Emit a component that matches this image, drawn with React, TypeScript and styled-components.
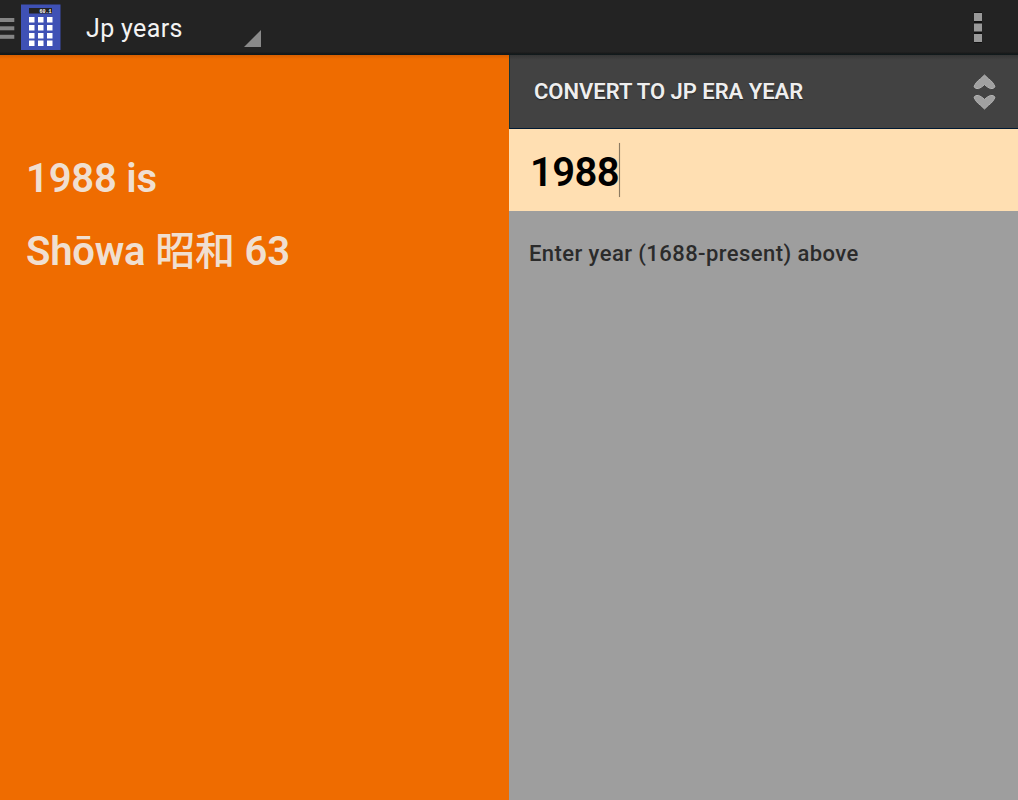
import React from "react";
import styled, { createGlobalStyle } from "styled-components";

const GlobalStyle = createGlobalStyle`
  * { box-sizing: border-box; }
  body { margin: 0; background: #9e9e9e; font-family: Roboto, "Noto Sans CJK JP", sans-serif; }
`;

const Screen = styled.div`
  width: 1018px;
  height: 800px;
  display: flex;
  flex-direction: column;
  overflow: hidden;
`;

const ActionBar = styled.header`
  height: 55px;
  flex: none;
  display: flex;
  align-items: flex-start;
  background: linear-gradient(#232323 0 52px, #1a1a1a 53px, #0f191c 55px);
`;

const DrawerIcon = styled.svg`
  flex: none;
  width: 15px;
  height: 55px;
`;

const AppIcon = styled.svg`
  flex: none;
  width: 40px;
  height: 47px;
  margin: 4px 0 0 6px;
`;

const Spinner = styled.div`
  width: 175px;
  height: 47px;
  margin-left: 25px;
  display: flex;
  justify-content: space-between;
  align-items: flex-end;
`;

const SpinnerLabel = styled.span`
  color: #f3f3f3;
  font-size: 25px;
  line-height: 30px;
  letter-spacing: 0.35px;
  padding-bottom: 3px;
  white-space: nowrap;
`;

const SpinnerCorner = styled.svg`
  width: 17px;
  height: 17px;
`;

const OverflowIcon = styled.svg`
  width: 10px;
  height: 32px;
  margin: 12px 35px 0 auto;
`;

const Panes = styled.main`
  flex: 1;
  display: flex;
`;

const ResultPane = styled.section`
  width: 509px;
  padding: 88px 26px 0;
  background: linear-gradient(#d85f00, #ef6c00 4px);
`;

const ResultLine = styled.p`
  margin: 0 0 1px;
  color: #f0dfd0;
  font-size: 40px;
  font-weight: 600;
  line-height: 72px;
  height: 72px;
  letter-spacing: -0.2px;
  white-space: pre;
`;

const EraName = styled.span`
  font-weight: 500;
`;

const InputPane = styled.section`
  flex: 1;
  display: flex;
  flex-direction: column;
  background: #9e9e9e;
`;

const ModeSelector = styled.div`
  height: 74px;
  display: flex;
  align-items: center;
  justify-content: space-between;
  padding: 0 22px 0 24px;
  border-left: 1px solid #173437;
  border-bottom: 1px solid #001a35;
  background: linear-gradient(#363636, #424242 5px);
`;

const ModeLabel = styled.span`
  color: #eeeeee;
  font-size: 22px;
  font-weight: 600;
  line-height: 28px;
  letter-spacing: -0.03px;
  text-shadow: 0 1px 1px #222;
`;

const ModeArrows = styled.svg`
  width: 23px;
  height: 36px;
`;

const YearField = styled.div`
  height: 82px;
  display: flex;
  align-items: center;
  padding: 4px 0 0 21px;
  background: #ffdfb2;
  color: #000;
  font-size: 40px;
  font-weight: 600;
  letter-spacing: -0.6px;
`;

const Caret = styled.span`
  width: 1px;
  height: 54px;
  margin-top: -4px;
  background: #8c7b62;
  box-shadow: 0 0 1px #b09a7b;
`;

const Hint = styled.p`
  margin: 28px 0 0 20px;
  color: #2b2b2b;
  font-size: 22px;
  font-weight: 500;
  line-height: 30px;
  letter-spacing: 0.43px;
  white-space: nowrap;
`;

const keyRows = [13, 21, 29, 36.5];
const keyCols = [8, 17, 26];

export default function App() {
  return (
    <Screen>
      <GlobalStyle />
      <ActionBar>
        <DrawerIcon viewBox="0 0 15 55" fill="#858585">
          <rect y="18" width="14.3" height="4" />
          <rect y="26.3" width="14.3" height="4" />
          <rect y="34.8" width="14.3" height="4" />
        </DrawerIcon>
        <AppIcon viewBox="0 0 40 47">
          <rect y="0.5" width="39.5" height="45.5" fill="#3f51b5" />
          <rect x="8" y="4" width="23" height="5.5" fill="#242424" />
          <text x="18.5" y="8.5" fontSize="5" fontWeight="700" fontFamily="Liberation Mono, monospace" fill="#fff">
            60.1
          </text>
          {keyRows.map((y) =>
            keyCols.map((x) => <rect key={`${x}-${y}`} x={x} y={y} width="5.5" height="5.5" fill="#fff" />)
          )}
        </AppIcon>
        <Spinner>
          <SpinnerLabel>Jp years</SpinnerLabel>
          <SpinnerCorner viewBox="0 0 17 17">
            <path d="M17 0V17H0Z" fill="#8a8a8a" />
          </SpinnerCorner>
        </Spinner>
        <OverflowIcon viewBox="0 0 10 32">
          <path d="M1 0h8v31H1z" fill="#111" />
          <path d="M1 1h8v8H1zM1 11.5h8v8H1zM1 22h8v8H1z" fill="#999" />
        </OverflowIcon>
      </ActionBar>
      <Panes>
        <ResultPane>
          <ResultLine>1988 is</ResultLine>
          <ResultLine>
            Shōwa <EraName>昭和</EraName> 63
          </ResultLine>
        </ResultPane>
        <InputPane>
          <ModeSelector>
            <ModeLabel>CONVERT TO JP ERA YEAR</ModeLabel>
            <ModeArrows viewBox="0 0 23 36" fill="#a0a0a0" stroke="#b4b4b4" strokeWidth="1" strokeLinejoin="round">
              <path d="M11.5 1L15.5 4.8C18.5 6.8 20.8 9.5 22 12.8Q20.5 15 17.5 14.6Q14.5 13.5 11.5 10.6Q8.5 13.5 5.5 14.6Q2.5 15 1 12.8C2.2 9.5 4.5 6.8 7.5 4.8Z" />
              <path d="M11.5 35L15.5 31.2C18.5 29.2 20.8 26.5 22 23.2Q20.5 21 17.5 21.4Q14.5 22.5 11.5 25.4Q8.5 22.5 5.5 21.4Q2.5 21 1 23.2C2.2 26.5 4.5 29.2 7.5 31.2Z" />
            </ModeArrows>
          </ModeSelector>
          <YearField>
            1988
            <Caret />
          </YearField>
          <Hint>Enter year (1688-present) above</Hint>
        </InputPane>
      </Panes>
    </Screen>
  );
}
